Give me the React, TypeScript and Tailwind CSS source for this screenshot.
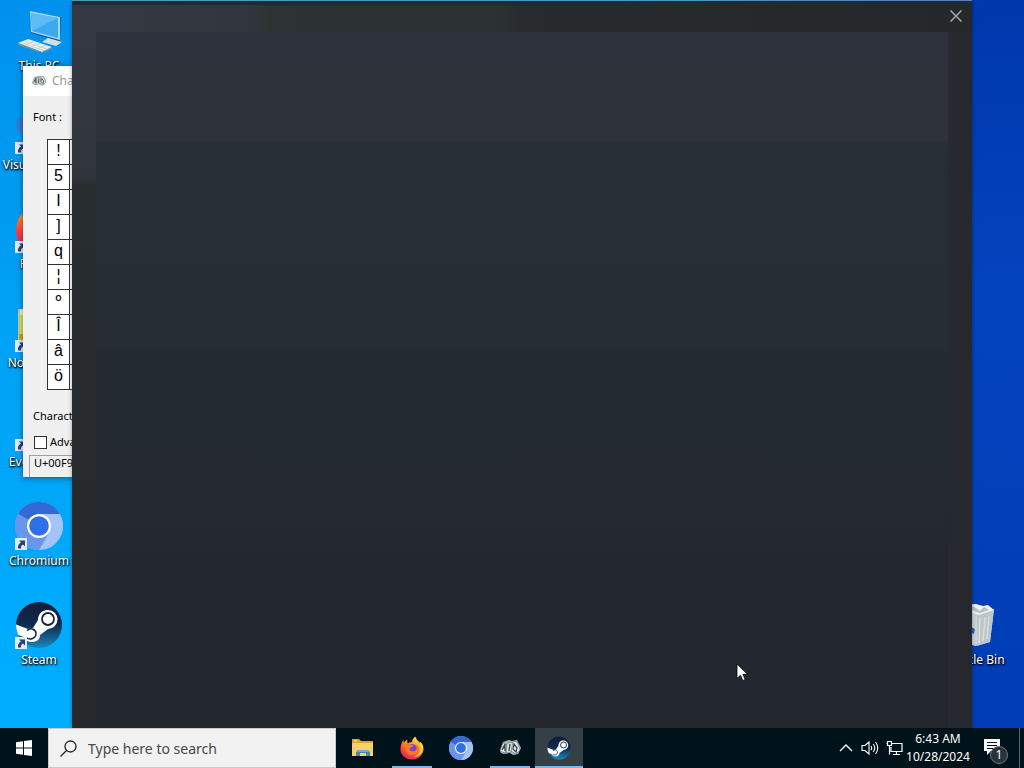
import React from "react";

function Shortcut() {
  return (
    <svg viewBox="0 0 12 12" className="absolute bottom-0 left-0 size-3" aria-hidden="true">
      <rect width="12" height="12" fill="#e4eaf3" />
      <path d="M4 2.500h6v6L8 6.600C6.400 7.500 5.800 8.700 6 10.500H3C2.600 8 3.700 5.700 6 4.500z" fill="#24427c" />
    </svg>
  );
}

function ComputerIcon() {
  return (
    <svg viewBox="0 0 48 48" className="size-12" aria-hidden="true">
      <path d="M15 4l31 6-1 25-29-9z" fill="#1d5c8d" />
      <path d="M15 4l30 6v23l-29-8z" fill="#9cdcff" />
      <path d="M16 6l27 5v20l-26-7z" fill="#3ba9ee" />
      <path d="M16 6l27 5-26 13z" fill="#5dbcf5" />
      <path d="M32 31l7 2v4l-7-2z" fill="#b6c7d0" />
      <path d="M27 35l6-4 14 4-6 4z" fill="#d3dfe6" />
      <path d="M3 36l10-4 24 8-10 5z" fill="#e6edf0" />
      <path d="M3 36l24 9 10-5v2l-10 4L3 38z" fill="#75909d" />
      <path d="M7 36l23 8M10 34.500l23 8M10 38l9-4M16 40l9-4M22 42l9-4" stroke="#b9c8cf" strokeWidth=".6" />
    </svg>
  );
}

function CodeIcon() {
  return (
    <svg viewBox="0 0 48 48" className="size-12" aria-hidden="true">
      <path d="M34 2l11 5v34l-11 5L3 17l5-4z" fill="#7b55b8" />
      <path d="M34 2v44L10 31l5 4z" fill="#9a72d8" />
      <path d="M2 14l7-4v18l-7-4z" fill="#3a76d6" />
    </svg>
  );
}

function FirefoxIcon({ className }: { className: string }) {
  return (
    <svg viewBox="0 0 48 48" className={className} aria-hidden="true">
      <defs>
        <linearGradient id="fox" x1=".8" y1="0" x2=".25" y2="1">
          <stop offset="0" stopColor="#fff14a" />
          <stop offset=".4" stopColor="#ff9a22" />
          <stop offset=".75" stopColor="#ff3b3f" />
          <stop offset="1" stopColor="#e5216e" />
        </linearGradient>
      </defs>
      <path d="M46 20c-1-4-4-8-7-9 2 3 2 5 2 6C38 10 32 8 31 1c-5 3-7 8-7 11-4 0-7 2-8 3-2-2-2-5-1-8-4 2-6 5-7 6-1-1-1-4-1-5C3 13 1 20 1 26c0 12 10 21 23 21s23-10 23-21c0-2 0-4-1-6z" fill="url(#fox)" />
      <circle cx="24" cy="27" r="11" fill="#7542e0" />
      <path d="M8 17c3-3 8-2 11 0 3 1 7 1 8 3-1 3-7 2-8 6 1 5 9 6 13 2 3-3 1-9-4-11 8 0 12 7 9 14-3 8-18 11-24 3-3-4-3-9-5-17z" fill="#ff7825" />
      <path d="M31 2c2 7 9 10 10 19 2 10-5 18-14 21 13-1 20-10 19-21-1-4-4-8-7-10 1 3 2 5 2 6C38 10 32 9 31 2z" fill="#ffd33a" />
    </svg>
  );
}

function NotepadIcon() {
  return (
    <svg viewBox="0 0 48 48" className="size-12" aria-hidden="true">
      <path d="M3 5h38v40H3z" fill="#f2f0d9" />
      <path d="M5 11h32v28H5z" fill="#d8e45d" />
      <path d="M4 5v34" stroke="#b9b98a" strokeWidth="1.500" />
      <path d="M4 30h4v6H4z" fill="#d8a51c" />
    </svg>
  );
}

function SearchFileIcon() {
  return (
    <svg viewBox="0 0 48 48" className="size-12" aria-hidden="true">
      <circle cx="28" cy="19" r="14" fill="none" stroke="#ff8b18" strokeWidth="6" />
      <path d="M20 29L14 38" stroke="#ff8b18" strokeWidth="7" />
    </svg>
  );
}

function ChromiumIcon({ className }: { className: string }) {
  return (
    <svg viewBox="0 0 48 48" className={className} aria-hidden="true">
      <circle cx="24" cy="24" r="24" fill="#82a9f5" />
      <path d="M24 24L3.200 12A24 24 0 0 1 44.800 12z" fill="#3269d6" />
      <path d="M24 12h20.800A24 24 0 0 1 24 48l10.400-18z" fill="#a3c4f8" />
      <path d="M3.200 12A24 24 0 0 0 24 48l10.400-18L24 24z" fill="#6796ea" />
      <circle cx="24" cy="24" r="12" fill="#fff" />
      <circle cx="24" cy="24" r="9.800" fill="#2f70e8" />
    </svg>
  );
}

function SteamIcon({ className }: { className: string }) {
  return (
    <svg viewBox="0 0 48 48" className={className} aria-hidden="true">
      <defs>
        <linearGradient id="steamDisc" x1="0" y1="0" x2="0" y2="1">
          <stop offset="0" stopColor="#111d36" />
          <stop offset=".5" stopColor="#102a51" />
          <stop offset="1" stopColor="#168abb" />
        </linearGradient>
        <clipPath id="steamClip"><circle cx="24" cy="24" r="23" /></clipPath>
      </defs>
      <circle cx="24" cy="24" r="23" fill="url(#steamDisc)" />
      <g clipPath="url(#steamClip)">
        <path d="M0 23l13 5 5-1 5-8c0-6 4-10 10-10a9.500 9.500 0 1 1 0 19l-8 6c0 5-4 7-8 7-4 0-7-2-8-5L0 33z" fill="#fff" />
        <circle cx="33" cy="18" r="6" fill="#fff" stroke="#172442" strokeWidth="1.800" />
        <path d="M12 29.500c4-3.500 9-1 9 3 0 5-6 7-10 4" fill="none" stroke="#172442" strokeWidth="1.500" />
      </g>
    </svg>
  );
}

function BinIcon() {
  return (
    <svg viewBox="0 0 48 48" className="size-12" aria-hidden="true">
      <path d="M9 7l19 5 17-4-4 33-15 4-13-5z" fill="#cbd4d6" />
      <path d="M28 13l17-5-4 33-13 4z" fill="#bdc6c8" />
      <path d="M9 7l7-3 11-1 7 2 5-1 6 5-15 5z" fill="#eef1ed" />
      <path d="M15 7l9-2 7 5 4-4 5 3-9 3z" fill="#b4bfc3" />
      <path d="M31 17l-1 25M36 16l-2 24M40 15l-2 23" stroke="#d8dede" strokeWidth="1.500" />
      <path d="M22 26l4 2-1 5-5-2z" fill="#2768c3" />
    </svg>
  );
}

function CharMapIcon({ className }: { className: string }) {
  return (
    <svg viewBox="0 0 24 20" className={className} aria-hidden="true">
      <path d="M2 13L5 4l6-2 3 1 5-1 4 8-3 6-5 1-3-2-6 1-3-1z" fill="#a9b7bb" />
      <path d="M2 13L5 5l4 2-2 8zM14 3l5 1 3 8-4 4-5-3z" fill="#e9eeec" stroke="#617074" strokeWidth=".6" />
      <path d="M9 5l6-1-2 10-5 1z" fill="#d3dcdb" stroke="#617074" strokeWidth=".6" />
      <path d="M4 12l3-6M7 6v7M5 10h2M12 6l-1 7M16 6l3 4-1 4-3-3z" fill="none" stroke="#39484e" strokeWidth="1.300" />
    </svg>
  );
}

function FolderIcon() {
  return (
    <svg viewBox="0 0 24 20" className="h-5 w-6" aria-hidden="true">
      <path d="M1 1h7l2 2h12v15H1z" fill="#dfa52c" />
      <path d="M1 5h21v13H1z" fill="#f6d264" />
      <path d="M3 3h3" stroke="#fff2b0" />
      <path d="M5 18v-4l2-2h10l2 2v4h-4v-3H9v3z" fill="#4387ad" />
      <path d="M7 12h10l2 2H5z" fill="#6fb0cd" />
    </svg>
  );
}

interface DesktopItem {
  name: string;
  icon: React.ReactNode;
  shortcut: boolean;
}

const items: DesktopItem[] = [
  { name: "This PC", icon: <ComputerIcon />, shortcut: false },
  { name: "Visual Studio", icon: <CodeIcon />, shortcut: true },
  { name: "Firefox", icon: <FirefoxIcon className="size-12" />, shortcut: true },
  { name: "Notepad++", icon: <NotepadIcon />, shortcut: true },
  { name: "Everything", icon: <SearchFileIcon />, shortcut: true },
  { name: "Chromium", icon: <ChromiumIcon className="size-12" />, shortcut: true },
  { name: "Steam", icon: <SteamIcon className="size-12" />, shortcut: true },
];

function DesktopIcon({ name, icon, shortcut }: DesktopItem) {
  return (
    <button className="flex h-[99px] w-[78px] flex-col items-center text-xs leading-[22px] whitespace-nowrap text-white [text-shadow:1px_1px_2px_#000,0_1px_2px_#000]">
      <span className="relative size-12 shrink-0">
        {icon}
        {shortcut && <Shortcut />}
      </span>
      <span>{name}</span>
    </button>
  );
}

const columns = 20;
const codes: number[] = [];
for (let c = 33; c < 127; c++) codes.push(c);
for (let c = 160; codes.length < columns * 10; c++) codes.push(c);
const rows = Array.from({ length: 10 }, (_, r) => codes.slice(r * columns, (r + 1) * columns));

function CharacterMap() {
  return (
    <section className="absolute top-[66px] left-[23px] flex h-[411px] w-[540px] flex-col overflow-hidden bg-[#f0f0f0] text-[11px] text-black shadow-[0_1px_6px_rgba(0,0,0,0.45)]">
      <header className="flex h-[30px] shrink-0 items-center gap-1 bg-white pl-2 text-xs text-[#999]">
        <CharMapIcon className="h-3.5 w-4" />
        <span className="pl-px">Character Map</span>
      </header>
      <div className="flex h-[43px] shrink-0 items-center pl-2.5">
        <label htmlFor="font">Font :</label>
        <select id="font" className="ml-4 w-72 border border-gray-400 bg-white"><option>Arial</option></select>
      </div>
      <div className="ml-[18px] w-[500px] border-l border-[#f8f8f8] pl-[5px]">
        <table className="table-fixed border-collapse bg-white text-center font-['Liberation_Sans',sans-serif] text-base">
          <tbody>
            {rows.map((row) => (
              <tr key={row[0]} className="h-[25px]">
                {row.map((code) => (
                  <td key={code} className="w-[22px] min-w-[22px] border border-[#333] p-0 pb-0.5 leading-[22px]">{String.fromCharCode(code)}</td>
                ))}
              </tr>
            ))}
          </tbody>
        </table>
      </div>
      <div className="flex flex-1 flex-col justify-end">
        <label htmlFor="copy" className="pb-2 pl-2.5 leading-4">Characters to copy :<input id="copy" className="ml-2 h-3.5 w-40 border border-gray-400 bg-white" /></label>
        <label className="flex h-5 items-center gap-[3px] pl-[11px]">
          <input type="checkbox" className="size-[13px] appearance-none border border-[#333] bg-white" />
          Advanced view
        </label>
        <footer className="mt-[3px] ml-1.5 h-[22px] border-t border-l border-[#a0a0a0] pl-1 leading-[14px]">U+00F9: Latin Small Letter U With Grave</footer>
      </div>
    </section>
  );
}

function DarkWindow() {
  return (
    <section className="absolute top-0 right-[52px] bottom-0 left-[72px] flex flex-col bg-[linear-gradient(90deg,#353943,#31363e_20%,#2d3233_22%,#2b3031_48%,#272b2d_50%,#25292a_76%,#24282a)] shadow-[0_0_4px_rgba(0,0,0,0.35)]">
      <div className="h-px shrink-0 bg-[linear-gradient(90deg,#42a0b8,#4699c8_60%,#587fc0)]" />
      <div className="h-1 shrink-0 bg-[#1d2a38]" />
      <header className="flex h-[27px] shrink-0 items-start justify-end pt-1 pr-[9px]">
        <button aria-label="Close" className="grid size-3.5 place-items-center">
          <svg viewBox="0 0 14 14" className="size-3.5"><path d="M1.500 1.500l11 11M12.500 1.500l-11 11" stroke="#a4a8aa" strokeWidth="1.500" /></svg>
        </button>
      </header>
      <div className="flex flex-1 bg-[#25282c]">
        <div className="w-6 bg-[linear-gradient(#343842,#31363d_21%,#282d2f_22%,#272b2d_60%,#25292b)]" />
        <div className="flex flex-1 flex-col">
          <div className="flex-1 bg-[linear-gradient(#2d313b_0%,#2d3139_16%,#282e36_17%,#272d35_47%,#242a31_48%,#242931_76%,#232730_77%,#232730_100%)]" />
          <div className="h-6 bg-[linear-gradient(#232730,#24282b)]" />
        </div>
        <div className="w-6 bg-[linear-gradient(90deg,#262a31,#25292d)]" />
      </div>
    </section>
  );
}

function Taskbar() {
  return (
    <footer className="flex h-10 shrink-0 bg-[#00121a] text-white">
      <button aria-label="Start" className="grid w-12 place-items-center">
        <svg viewBox="0 0 16 16" className="size-4" fill="#fff"><path d="M0 2.200l7-1v6.300H0zM8 1l8-1v7.500H8zM0 8.500h7v6.300l-7-1zM8 8.500h8V16l-8-1z" /></svg>
      </button>
      <div className="flex w-72 items-center gap-[11px] border border-[#c8cbcd] bg-[#f2f2f2] pl-[11px]">
        <svg viewBox="0 0 17 17" className="size-[17px]" fill="none" stroke="#222" strokeWidth="1.300"><circle cx="10.500" cy="6.500" r="5.500" /><path d="M6.500 10.500L.5 16.500" /></svg>
        <input type="text" aria-label="Search" placeholder="Type here to search" className="min-w-0 flex-1 bg-transparent pt-0.5 text-sm text-[#444] outline-none placeholder:text-[#484848] placeholder:opacity-100" />
      </div>
      <nav className="flex pl-[3px]">
        <button aria-label="File Explorer" className="grid w-12 place-items-center"><FolderIcon /></button>
        <button aria-label="Firefox" className="relative ml-px grid w-12 place-items-center"><FirefoxIcon className="size-6" /><span className="absolute inset-x-1 bottom-0 h-0.5 bg-[#76b9ed]" /></button>
        <button aria-label="Chromium" className="ml-px grid w-12 place-items-center"><ChromiumIcon className="size-6" /></button>
        <button aria-label="Character Map" className="relative ml-px grid w-12 place-items-center"><CharMapIcon className="h-5 w-6" /><span className="absolute inset-x-1 bottom-0 h-0.5 bg-[#76b9ed]" /></button>
        <button aria-label="Steam" className="relative ml-px grid w-12 place-items-center bg-[#343f46]"><SteamIcon className="size-6" /><span className="absolute inset-x-0 bottom-0 h-0.5 bg-[#76b9ed]" /></button>
      </nav>
      <div className="ml-auto flex items-center">
        <button aria-label="Show hidden icons" className="grid w-6 place-items-center">
          <svg viewBox="0 0 14 10" className="h-2.5 w-3.5" fill="none" stroke="#fff" strokeWidth="1.400"><path d="M1 8l6-6 6 6" /></svg>
        </button>
        <button aria-label="Volume" className="grid w-6 place-items-center">
          <svg viewBox="0 0 18 16" className="h-4 w-[18px]" fill="none" stroke="#fff" strokeWidth="1.100"><path d="M1 5.500h3l4-3.500v12l-4-3.500H1zM10 6q1.500 2 0 4M12.200 4q3.200 4 0 8M14.500 2q4.500 6 0 12" /></svg>
        </button>
        <button aria-label="Network" className="grid w-6 place-items-center">
          <svg viewBox="0 0 17 16" className="h-4 w-[17px]" fill="none" stroke="#fff" strokeWidth="1.200"><path d="M6 3.500h10v8H5V7M10.500 11.500v3M7 14.500h7M1.500 1.500h4v4h-4zM3.500 5.500v9M.5 3.500h1" /></svg>
        </button>
        <time className="w-16 text-center text-xs leading-[18px]">6:43 AM<br />10/28/2024</time>
        <button aria-label="Notifications, 1 new" className="relative grid h-10 w-[49px] place-items-center">
          <svg viewBox="0 0 28 24" className="h-6 w-7"><path d="M3 3h16v12h-9l-4 4v-4H3z" fill="#fff" /><path d="M6 6.500h10M6 9.500h10M6 12.500h6" stroke="#00121a" strokeWidth="1.200" /></svg>
          <span className="absolute top-[18px] left-5 grid size-[18px] place-items-center rounded-full border border-[#69757a] bg-[#28343a] text-xs leading-none">1</span>
        </button>
        <button aria-label="Show desktop" className="h-10 w-[5px] border-l border-[#59656b]" />
      </div>
    </footer>
  );
}

export default function App() {
  return (
    <main className="flex h-screen flex-col overflow-hidden font-['Noto_Sans',sans-serif]">
      <div className="relative flex min-h-0 flex-1 items-start justify-between overflow-hidden bg-[linear-gradient(#0091ec,#00a2f5_45%,#00aeff)]">
        <div className="absolute inset-y-0 right-0 w-1/2 bg-[linear-gradient(#0038ad,#0343bd_40%,#003db6)]" />
        <div className="relative flex flex-col pt-[7px]">
          {items.map((item) => <DesktopIcon key={item.name} {...item} />)}
        </div>
        <div className="relative flex h-full flex-col justify-end pr-3">
          <DesktopIcon name="Recycle Bin" icon={<BinIcon />} shortcut={false} />
          <div className="h-7" />
        </div>
        <CharacterMap />
        <DarkWindow />
        <svg viewBox="0 0 12 19" className="absolute top-[663px] left-[736px] h-[19px] w-3" aria-hidden="true">
          <path d="M1 1v14.500l3.500-3.300 2.300 5.300 2.400-1-2.300-5.200h4.600z" fill="#fff" stroke="#000" strokeWidth=".8" />
        </svg>
      </div>
      <Taskbar />
    </main>
  );
}
